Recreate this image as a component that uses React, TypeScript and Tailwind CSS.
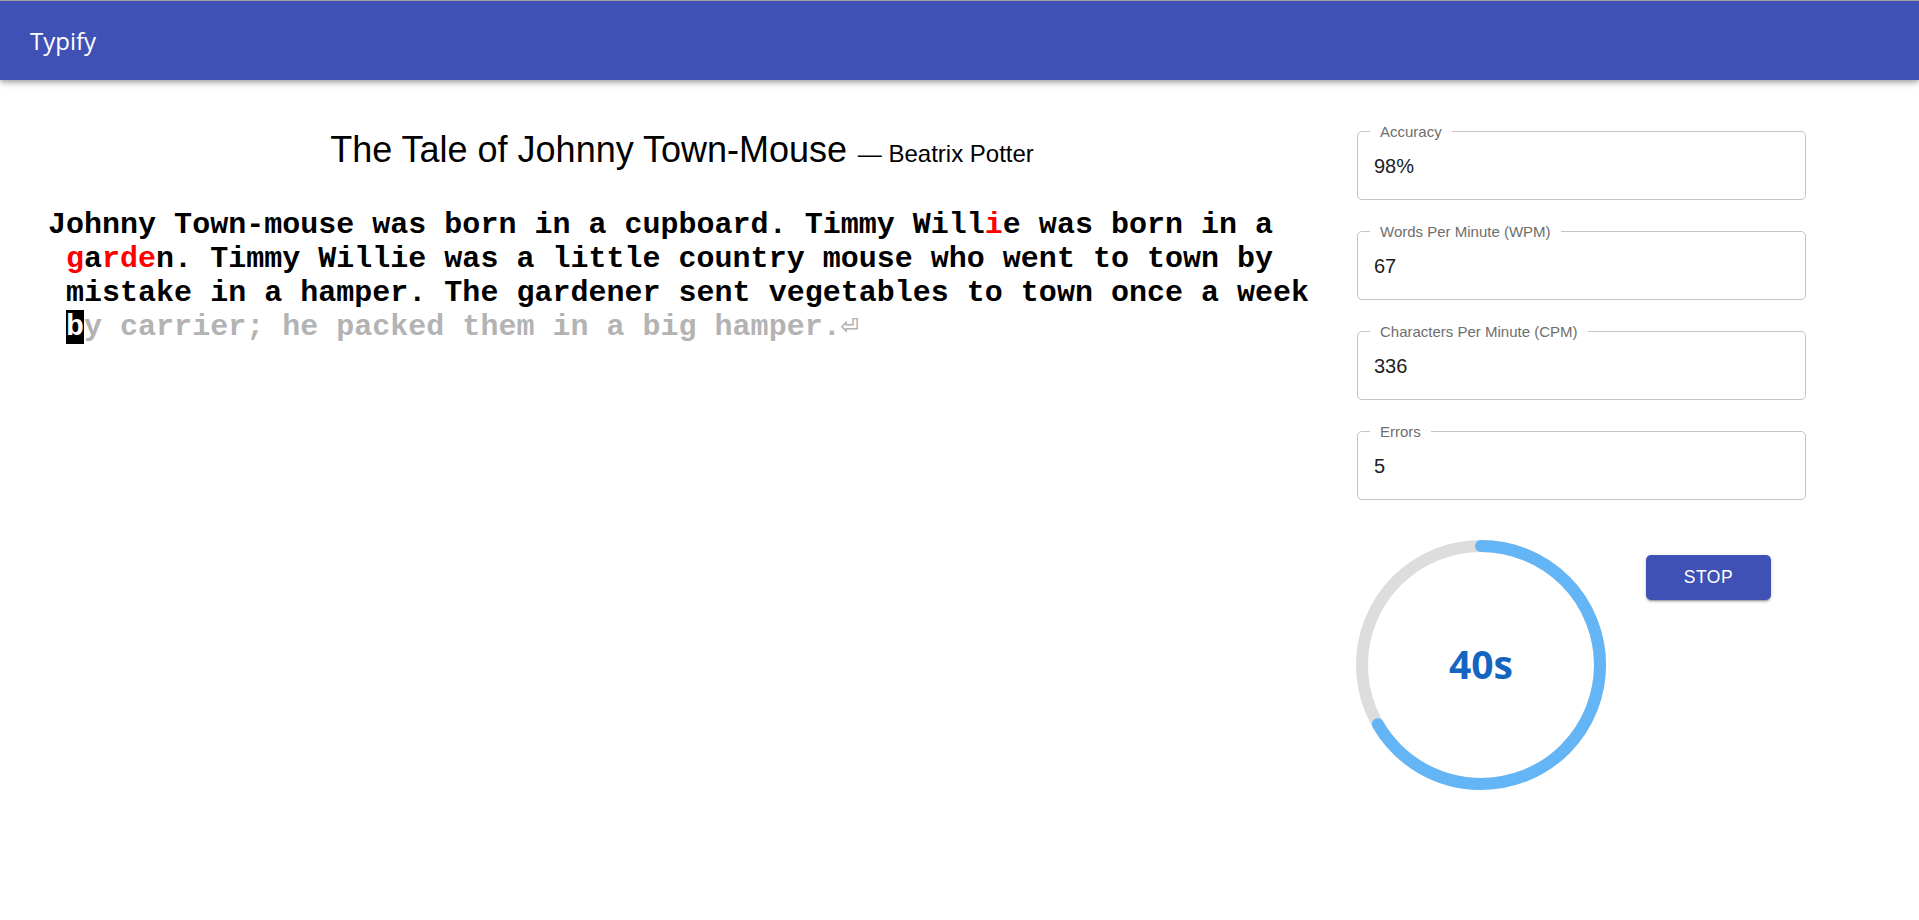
import React from "react";

const TEXT =
  "Johnny Town-mouse was born in a cupboard. Timmy Willie was born in a garden. Timmy Willie was a little country mouse who went to town by mistake in a hamper. The gardener sent vegetables to town once a week by carrier; he packed them in a big hamper.\u23CE";

const cursor = TEXT.indexOf("by carrier");
const w = TEXT.indexOf("Willie");
const g = TEXT.indexOf("garden");
const errors = new Set([w + 4, g, g + 2, g + 3, g + 4]);

function charClass(i: number) {
  if (i === cursor) return "bg-black text-white";
  if (i > cursor) return "text-[#b3b3b3]";
  if (errors.has(i)) return "text-[#ff0000]";
  return "text-black";
}

function TypingText() {
  const tokens = TEXT.split(/(?= )/);
  let idx = 0;
  return (
    <div className="font-['Liberation_Mono',monospace] font-bold text-[30px] leading-[34px]">
      {tokens.map((tok, ti) => {
        const start = idx;
        idx += tok.length;
        return (
          <span key={ti} className="inline-block whitespace-pre">
            {tok.split("").map((c, ci) => (
              <span key={ci} className={charClass(start + ci)}>
                {c}
              </span>
            ))}
          </span>
        );
      })}
    </div>
  );
}

function Field({ label, value }: { label: string; value: string }) {
  return (
    <div className="relative h-[69px] rounded-[5px] border border-[#c4c4c4] flex items-center pl-[16px]">
      <span className="absolute -top-[9px] left-[12px] px-[10px] bg-white text-[15px] leading-[17px] text-[#6e6e6e] font-['Liberation_Sans',Arial,sans-serif]">
        {label}
      </span>
      <span className="text-[20px] text-[#212121] font-['Liberation_Sans',Arial,sans-serif]">
        {value}
      </span>
    </div>
  );
}

function Timer() {
  const r = 119;
  const c = 2 * Math.PI * r;
  const frac = 40 / 60;
  return (
    <div className="relative w-[250px] h-[250px] shrink-0">
      <svg width="250" height="250" viewBox="0 0 250 250" className="absolute inset-0">
        <circle cx="125" cy="125" r={r} fill="none" stroke="#dddddd" strokeWidth="12" />
        <circle
          cx="125"
          cy="125"
          r={r}
          fill="none"
          stroke="#64b5f6"
          strokeWidth="12"
          strokeLinecap="round"
          strokeDasharray={`${c * frac} ${c}`}
          transform="rotate(-90 125 125)"
        />
      </svg>
      <div className="absolute inset-0 flex items-center justify-center pb-[3px]">
        <span className="font-['Open_Sans',sans-serif] font-bold text-[39px] text-[#1565c0] leading-none">
          40s
        </span>
      </div>
    </div>
  );
}

export default function App() {
  return (
    <div className="min-h-[920px] bg-white">
      <header className="h-[80px] bg-[#3f51b5] border-t border-[#a0a0a0] flex items-center px-[30px] shadow-[0_2px_4px_-1px_rgba(0,0,0,0.2),0_4px_5px_0_rgba(0,0,0,0.14),0_1px_10px_0_rgba(0,0,0,0.12)] relative z-10">
        <span className="text-white text-[24px] font-['Open_Sans',sans-serif]">Typify</span>
      </header>
      <main className="flex">
        <section className="w-[1357px] shrink-0 pl-[48px] pr-[41px] pt-[49px]">
          <h1 className="text-center text-[36px] text-black font-['Liberation_Sans',Arial,sans-serif] leading-[41px]">
            The Tale of Johnny Town-Mouse
            <span className="text-[24px] ml-[4px]">&nbsp;— Beatrix Potter</span>
          </h1>
          <div className="mt-[34px]">
            <TypingText />
          </div>
        </section>
        <aside className="w-[449px] shrink-0 pt-[51px] flex flex-col">
          <div className="flex flex-col gap-[31px]">
            <Field label="Accuracy" value="98%" />
            <Field label="Words Per Minute (WPM)" value="67" />
            <Field label="Characters Per Minute (CPM)" value="336" />
            <Field label="Errors" value="5" />
          </div>
          <div className="mt-[40px] flex items-start gap-[40px] -ml-[1px]">
            <Timer />
            <button className="mt-[15px] w-[125px] h-[45px] rounded-[5px] bg-[#3f51b5] text-white text-[17.5px] tracking-[0.5px] font-['Liberation_Sans',Arial,sans-serif] shadow-[0_3px_1px_-2px_rgba(0,0,0,0.2),0_2px_2px_0_rgba(0,0,0,0.14),0_1px_5px_0_rgba(0,0,0,0.12)]">
              STOP
            </button>
          </div>
        </aside>
      </main>
    </div>
  );
}
